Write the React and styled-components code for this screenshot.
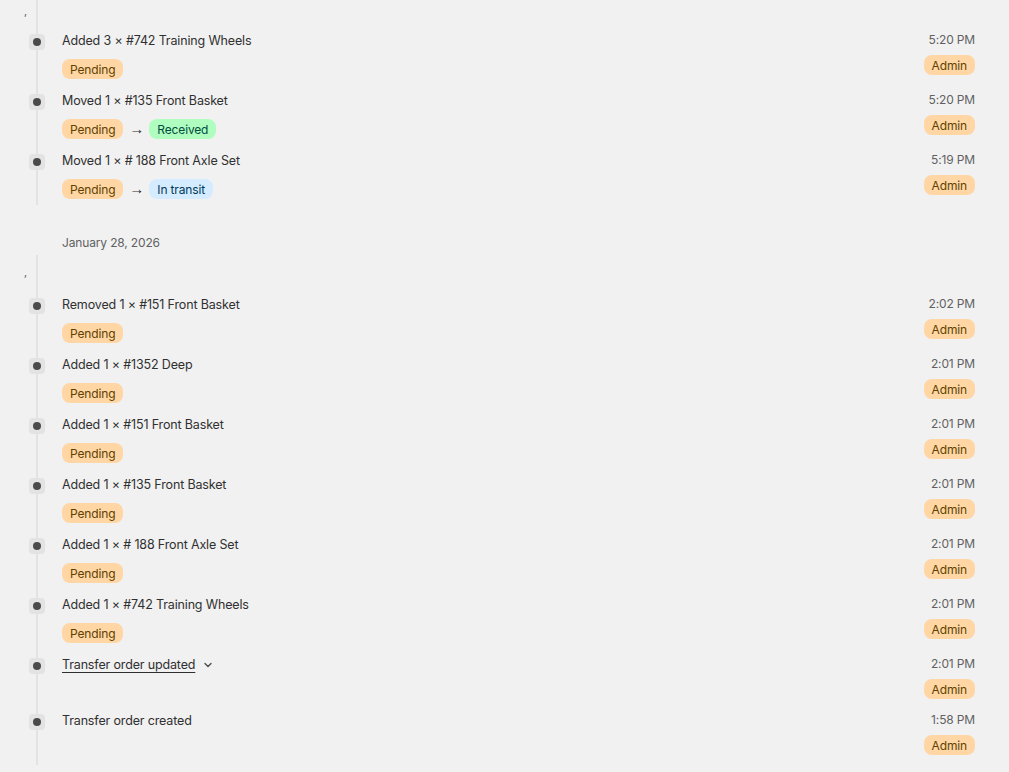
import React from "react"
import styled, { createGlobalStyle } from "styled-components"

const GlobalStyle = createGlobalStyle`
  html, body {
    margin: 0;
    padding: 0;
    background: #f1f1f1;
  }
  body {
    font-family: Inter, "Noto Sans", "Liberation Sans", sans-serif;
    color: #303030;
    letter-spacing: -0.15px;
    -webkit-font-smoothing: antialiased;
  }
`

const Page = styled.div`
  width: 1009px;
  height: 772px;
  overflow: hidden;
  padding: 0 34px 0 20px;
  box-sizing: border-box;
`

const Group = styled.section`
  position: relative;
  display: flex;
  flex-direction: column;
  gap: 12px;
  padding: ${p => (p.$first ? "6px 0 6px" : "12px 0 10px")};
  &::before {
    content: "";
    position: absolute;
    left: 16px;
    top: ${p => (p.$first ? "-20px" : "0")};
    bottom: 0;
    width: 2px;
    background: #e3e3e3;
  }
`

const Tick = styled.div`
  height: 16px;
  margin-top: -3px;
  margin-bottom: ${p => (p.$first ? "0" : "3px")};
  padding-left: 4px;
  font-size: 11px;
  line-height: 16px;
  color: #616161;
`

const DateLabel = styled.div`
  padding: 30px 0 4px 42px;
  font-size: 12px;
  line-height: 16px;
  color: #616161;
`

const Entry = styled.div`
  display: grid;
  grid-template-columns: 16px 1fr auto;
  column-gap: 17px;
  padding-left: 9px;
`

const Marker = styled.div`
  position: relative;
  z-index: 1;
  width: 16px;
  height: 16px;
  margin-top: 3px;
  border-radius: 4px;
  background: #e3e3e3;
  display: flex;
  align-items: center;
  justify-content: center;
  &::after {
    content: "";
    width: 8px;
    height: 8px;
    border-radius: 50%;
    background: #4a4a4a;
  }
`

const Body = styled.div`
  display: flex;
  flex-direction: column;
  gap: 8px;
`

const Title = styled.div`
  font-size: 12.5px;
  line-height: 20px;
  display: flex;
  align-items: center;
  gap: 8px;
`

const Link = styled.span`
  text-decoration: underline;
  text-underline-offset: 3px;
`

const Statuses = styled.div`
  display: flex;
  align-items: center;
  gap: 6px;
`

const Arrow = styled.span`
  font-family: "Liberation Sans", sans-serif;
  font-size: 15px;
  line-height: 20px;
  color: #303030;
  width: 14px;
  text-align: center;
`

const tones = {
  pending: { bg: "#ffd6a4", fg: "#5e4200" },
  success: { bg: "#affebf", fg: "#014b40" },
  info: { bg: "#d5ebff", fg: "#003a5a" },
}

const Badge = styled.span`
  display: inline-flex;
  align-items: center;
  height: 20px;
  padding: 0 8px;
  border-radius: 8px;
  font-size: 12px;
  background: ${p => tones[p.$tone].bg};
  color: ${p => tones[p.$tone].fg};
`

const Meta = styled.div`
  display: flex;
  flex-direction: column;
  align-items: flex-end;
  gap: 4px;
`

const Time = styled.div`
  font-size: 12px;
  line-height: 20px;
  color: #616161;
  margin-top: -1px;
  margin-bottom: 1px;
`

const Chevron = () => (
  <svg width="10" height="10" viewBox="0 0 10 10" fill="none">
    <path d="M2 3.5 L5 6.5 L8 3.5" stroke="#4a4a4a" strokeWidth="1.3" strokeLinecap="round" strokeLinejoin="round" />
  </svg>
)

const first = [
  { text: "Added 3 × #742 Training Wheels", from: "Pending", time: "5:20 PM" },
  { text: "Moved 1 × #135 Front Basket", from: "Pending", to: ["Received", "success"], time: "5:20 PM" },
  { text: "Moved 1 × # 188 Front Axle Set", from: "Pending", to: ["In transit", "info"], time: "5:19 PM" },
]

const second = [
  { text: "Removed 1 × #151 Front Basket", from: "Pending", time: "2:02 PM" },
  { text: "Added 1 × #1352 Deep", from: "Pending", time: "2:01 PM" },
  { text: "Added 1 × #151 Front Basket", from: "Pending", time: "2:01 PM" },
  { text: "Added 1 × #135 Front Basket", from: "Pending", time: "2:01 PM" },
  { text: "Added 1 × # 188 Front Axle Set", from: "Pending", time: "2:01 PM" },
  { text: "Added 1 × #742 Training Wheels", from: "Pending", time: "2:01 PM" },
  { text: "Transfer order updated", link: true, time: "2:01 PM" },
  { text: "Transfer order created", time: "1:58 PM" },
]

const TimelineEntry = ({ item }) => (
  <Entry>
    <Marker />
    <Body>
      <Title>
        {item.link ? <Link>{item.text}</Link> : item.text}
        {item.link && <Chevron />}
      </Title>
      {item.from && (
        <Statuses>
          <Badge $tone="pending">{item.from}</Badge>
          {item.to && (
            <>
              <Arrow>→</Arrow>
              <Badge $tone={item.to[1]}>{item.to[0]}</Badge>
            </>
          )}
        </Statuses>
      )}
    </Body>
    <Meta>
      <Time>{item.time}</Time>
      <Badge $tone="pending">Admin</Badge>
    </Meta>
  </Entry>
)

export default function App() {
  return (
    <Page>
      <GlobalStyle />
      <Group $first>
        <Tick $first>‚</Tick>
        {first.map((item, i) => (
          <TimelineEntry key={i} item={item} />
        ))}
      </Group>
      <DateLabel>January 28, 2026</DateLabel>
      <Group>
        <Tick>‚</Tick>
        {second.map((item, i) => (
          <TimelineEntry key={i} item={item} />
        ))}
      </Group>
    </Page>
  )
}
